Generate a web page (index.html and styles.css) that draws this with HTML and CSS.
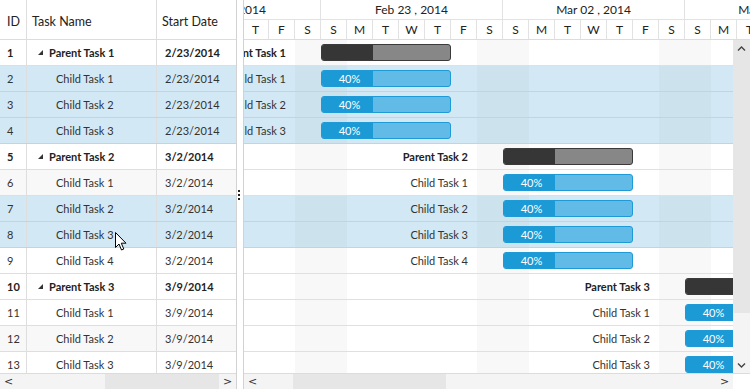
FILE: index.html
```html
<!DOCTYPE html>
<html lang="en">
<head>
    <meta charset="UTF-8">
    <title>Gantt</title>
    <link rel="stylesheet" href="styles.css">
</head>
<body>
    <div class="gantt">
        <!-- Task grid -->
        <div class="grid-pane">
            <div class="grid-head">
                <div class="cell col-id">ID</div>
                <div class="cell col-name">Task Name</div>
                <div class="cell col-date">Start Date</div>
            </div>
            <div class="grid-body">
                <div class="row parent"><div class="cell col-id">1</div><div class="cell col-name"><span class="caret"></span>Parent Task 1</div><div class="cell col-date">2/23/2014</div></div>
                <div class="row selected"><div class="cell col-id">2</div><div class="cell col-name child">Child Task 1</div><div class="cell col-date">2/23/2014</div></div>
                <div class="row selected"><div class="cell col-id">3</div><div class="cell col-name child">Child Task 2</div><div class="cell col-date">2/23/2014</div></div>
                <div class="row selected"><div class="cell col-id">4</div><div class="cell col-name child">Child Task 3</div><div class="cell col-date">2/23/2014</div></div>
                <div class="row parent"><div class="cell col-id">5</div><div class="cell col-name"><span class="caret"></span>Parent Task 2</div><div class="cell col-date">3/2/2014</div></div>
                <div class="row alt"><div class="cell col-id">6</div><div class="cell col-name child">Child Task 1</div><div class="cell col-date">3/2/2014</div></div>
                <div class="row selected"><div class="cell col-id">7</div><div class="cell col-name child">Child Task 2</div><div class="cell col-date">3/2/2014</div></div>
                <div class="row selected"><div class="cell col-id">8</div><div class="cell col-name child">Child Task 3</div><div class="cell col-date">3/2/2014</div></div>
                <div class="row"><div class="cell col-id">9</div><div class="cell col-name child">Child Task 4</div><div class="cell col-date">3/2/2014</div></div>
                <div class="row parent"><div class="cell col-id">10</div><div class="cell col-name"><span class="caret"></span>Parent Task 3</div><div class="cell col-date">3/9/2014</div></div>
                <div class="row"><div class="cell col-id">11</div><div class="cell col-name child">Child Task 1</div><div class="cell col-date">3/9/2014</div></div>
                <div class="row alt"><div class="cell col-id">12</div><div class="cell col-name child">Child Task 2</div><div class="cell col-date">3/9/2014</div></div>
                <div class="row"><div class="cell col-id">13</div><div class="cell col-name child">Child Task 3</div><div class="cell col-date">3/9/2014</div></div>
            </div>
            <div class="hscroll">
                <div class="sb-btn">&lt;</div>
                <div class="sb-track"><div class="sb-thumb grid-thumb"></div></div>
                <div class="sb-btn">&gt;</div>
            </div>
        </div>

        <!-- Splitter -->
        <div class="splitter">
            <div class="grip"><span></span><span></span><span></span></div>
        </div>

        <!-- Chart -->
        <div class="chart-pane">
            <div class="timeline">
                <div class="weeks">
                    <div class="week">Feb 16 , 2014</div>
                    <div class="week">Feb 23 , 2014</div>
                    <div class="week">Mar 02 , 2014</div>
                    <div class="week">Mar 09 , 2014</div>
                </div>
                <div class="days">
                    <div class="day">S</div><div class="day">M</div><div class="day">T</div><div class="day">W</div><div class="day">T</div><div class="day">F</div><div class="day">S</div>
                    <div class="day">S</div><div class="day">M</div><div class="day">T</div><div class="day">W</div><div class="day">T</div><div class="day">F</div><div class="day">S</div>
                    <div class="day">S</div><div class="day">M</div><div class="day">T</div><div class="day">W</div><div class="day">T</div><div class="day">F</div><div class="day">S</div>
                    <div class="day">S</div><div class="day">M</div><div class="day">T</div><div class="day">W</div><div class="day">T</div><div class="day">F</div><div class="day">S</div>
                </div>
            </div>
            <div class="chart-body">
                <div class="chart-rows">
                    <div class="chart-row"><div class="bar-label wk1 bold">Parent Task 1</div><div class="bar summary"><div class="done"></div></div></div>
                    <div class="chart-row selected"><div class="bar-label wk1">Child Task 1</div><div class="bar task"><div class="done">40%</div></div></div>
                    <div class="chart-row selected"><div class="bar-label wk1">Child Task 2</div><div class="bar task"><div class="done">40%</div></div></div>
                    <div class="chart-row selected"><div class="bar-label wk1">Child Task 3</div><div class="bar task"><div class="done">40%</div></div></div>
                    <div class="chart-row"><div class="bar-label wk2 bold">Parent Task 2</div><div class="bar summary"><div class="done"></div></div></div>
                    <div class="chart-row"><div class="bar-label wk2">Child Task 1</div><div class="bar task"><div class="done">40%</div></div></div>
                    <div class="chart-row selected"><div class="bar-label wk2">Child Task 2</div><div class="bar task"><div class="done">40%</div></div></div>
                    <div class="chart-row selected"><div class="bar-label wk2">Child Task 3</div><div class="bar task"><div class="done">40%</div></div></div>
                    <div class="chart-row"><div class="bar-label wk2">Child Task 4</div><div class="bar task"><div class="done">40%</div></div></div>
                    <div class="chart-row"><div class="bar-label wk3 bold">Parent Task 3</div><div class="bar summary"><div class="done"></div></div></div>
                    <div class="chart-row"><div class="bar-label wk3">Child Task 1</div><div class="bar task"><div class="done">40%</div></div></div>
                    <div class="chart-row"><div class="bar-label wk3">Child Task 2</div><div class="bar task"><div class="done">40%</div></div></div>
                    <div class="chart-row"><div class="bar-label wk3">Child Task 3</div><div class="bar task"><div class="done">40%</div></div></div>
                </div>
                <div class="vscroll">
                    <div class="sb-btn"><svg width="9" height="8" viewBox="0 0 9 8"><polyline points="1,5.5 4.5,2 8,5.5" fill="none" stroke="#444" stroke-width="1.4"/></svg></div>
                    <div class="sb-thumb-v"></div>
                    <div class="sb-rest"></div>
                    <div class="sb-btn"><svg width="9" height="8" viewBox="0 0 9 8"><polyline points="1,2.5 4.5,6 8,2.5" fill="none" stroke="#444" stroke-width="1.4"/></svg></div>
                </div>
            </div>
            <div class="hscroll">
                <div class="sb-btn">&lt;</div>
                <div class="sb-track"><div class="sb-thumb chart-thumb"></div></div>
                <div class="sb-btn">&gt;</div>
                <div class="corner"></div>
            </div>
        </div>

        <!-- Mouse pointer -->
        <svg class="pointer" width="13" height="20" viewBox="0 0 13 20">
            <path d="M0.5,0.5 L0.5,15.5 L4,12 L6.5,18 L8.8,17 L6.3,11.2 L11,11.2 Z" fill="#fff" stroke="#000" stroke-width="1"/>
        </svg>
    </div>
</body>
</html>
```

FILE: styles.css
```css
* {
    box-sizing: border-box;
}

body {
    margin: 0;
    font-family: Lato, "Noto Sans", sans-serif;
    font-size: 11px;
    color: #333;
    background-color: #ffffff;
}

.gantt {
    position: relative;
    display: flex;
    width: 750px;
    height: 389px;
    overflow: hidden;
}

/* Grid pane */
.grid-pane {
    width: 237px;
    flex: none;
    display: flex;
    flex-direction: column;
    border-right: 1px solid #d2d2d2;
}
.grid-head {
    height: 40px;
    flex: none;
    display: flex;
    border-bottom: 1px solid #dcdcdc;
    font-size: 12.5px;
    color: #222;
}
.grid-head .cell {
    padding-top: 3px;
}
.grid-body {
    flex: 1;
    min-height: 0;
    overflow: hidden;
}
.row {
    height: 26px;
    display: flex;
    border-bottom: 1px solid #dedede;
    background-color: #ffffff;
}
.row.alt {
    background-color: #f8f8f8;
}
.row.selected {
    background-color: #d2e9f5;
    border-bottom-color: #bcd6e4;
}
.row.parent {
    font-weight: bold;
    color: #222;
}
.cell {
    display: flex;
    align-items: center;
    white-space: nowrap;
    border-right: 1px solid #dedede;
}
.col-id {
    width: 27px;
    padding-left: 7px;
}
.col-name {
    width: 130px;
    padding-left: 5px;
}
.col-name.child {
    padding-left: 29px;
}
.col-date {
    flex: 1;
    padding-left: 5px;
    border-right: none;
}
.row .col-date {
    padding-left: 8px;
}
.caret {
    width: 0;
    height: 0;
    margin: 0 6px 0 6px;
    border-left: 5px solid transparent;
    border-bottom: 5px solid #333;
}

/* Splitter */
.splitter {
    width: 6px;
    flex: none;
    display: flex;
    align-items: center;
    background-color: #ffffff;
}
.grip {
    display: flex;
    flex-direction: column;
    gap: 2px;
    margin-left: 1px;
}
.grip span {
    width: 2px;
    height: 2px;
    background-color: #222;
}

/* Chart pane */
.chart-pane {
    flex: 1;
    min-width: 0;
    display: flex;
    flex-direction: column;
    border-left: 1px solid #d2d2d2;
    overflow: hidden;
}
.timeline {
    height: 40px;
    flex: none;
    border-bottom: 1px solid #dcdcdc;
    overflow: hidden;
    color: #222;
    font-size: 12px;
}
.weeks,
.days {
    display: flex;
    margin-left: -105px;
}
.weeks {
    height: 20px;
    border-bottom: 1px solid #e2e2e2;
}
.days {
    height: 19px;
}
.week {
    width: 182px;
    flex: none;
    display: flex;
    align-items: center;
    justify-content: center;
    border-right: 1px solid #e2e2e2;
}
.day {
    width: 26px;
    flex: none;
    display: flex;
    align-items: center;
    justify-content: center;
    border-right: 1px solid #e2e2e2;
}

.chart-body {
    flex: 1;
    display: flex;
    min-height: 0;
}
.chart-rows {
    flex: 1;
    overflow: hidden;
}
.chart-row {
    height: 26px;
    display: flex;
    align-items: center;
    border-bottom: 1px solid #e0e0e0;
    background-color: #ffffff;
    background-image: repeating-linear-gradient(90deg, transparent 0 51px, rgba(0, 0, 0, 0.028) 51px 103px, transparent 103px 182px);
}
.chart-row.selected {
    background-color: #d2e9f5;
    border-bottom-color: #bcd6e4;
}
.bar-label {
    flex: none;
    display: flex;
    justify-content: flex-end;
    white-space: nowrap;
    margin-right: 35px;
}
.bar-label.bold {
    font-weight: bold;
    color: #222;
}
.wk1 { width: 42px; }
.wk2 { width: 224px; }
.wk3 { width: 406px; }

.bar {
    width: 130px;
    height: 17px;
    flex: none;
    display: flex;
    border-radius: 3px;
    border: 1px solid;
    overflow: hidden;
}
.bar .done {
    width: 51px;
    display: flex;
    align-items: center;
    justify-content: center;
    color: #ffffff;
    font-size: 11px;
    padding-left: 4px;
}
.bar.summary {
    background-color: #878787;
    border-color: #3a3a3a;
}
.bar.summary .done {
    background-color: #363636;
}
.bar.task {
    background-color: #62bbe6;
    border-color: #1e9ad6;
}
.bar.task .done {
    background-color: #1c9ad6;
}

/* Scrollbars */
.vscroll {
    width: 17px;
    flex: none;
    display: flex;
    flex-direction: column;
    background-color: #f4f4f4;
}
.vscroll .sb-btn {
    height: 17px;
}
.vscroll .sb-btn:first-child {
    background-color: #e6e6e6;
}
.sb-thumb-v {
    height: 256px;
    flex: none;
    background-color: #e6e6e6;
}
.sb-rest {
    flex: 1;
}
.sb-btn {
    width: 17px;
    flex: none;
    display: flex;
    align-items: center;
    justify-content: center;
    font-family: "DejaVu Sans", sans-serif;
    font-size: 11px;
    color: #333;
}
.hscroll {
    height: 16px;
    flex: none;
    display: flex;
    background-color: #f4f4f4;
    border-top: 1px solid #dcdcdc;
}
.sb-track {
    flex: 1 1 0;
    min-width: 0;
}
.sb-thumb {
    height: 100%;
    background-color: #e6e6e6;
}
.grid-thumb {
    width: 114px;
    margin-left: 88px;
}
.chart-thumb {
    width: 153px;
    margin-left: 32px;
}
.corner {
    width: 17px;
    flex: none;
    background-color: #ffffff;
}

.pointer {
    position: absolute;
    left: 115px;
    top: 232px;
}
```
